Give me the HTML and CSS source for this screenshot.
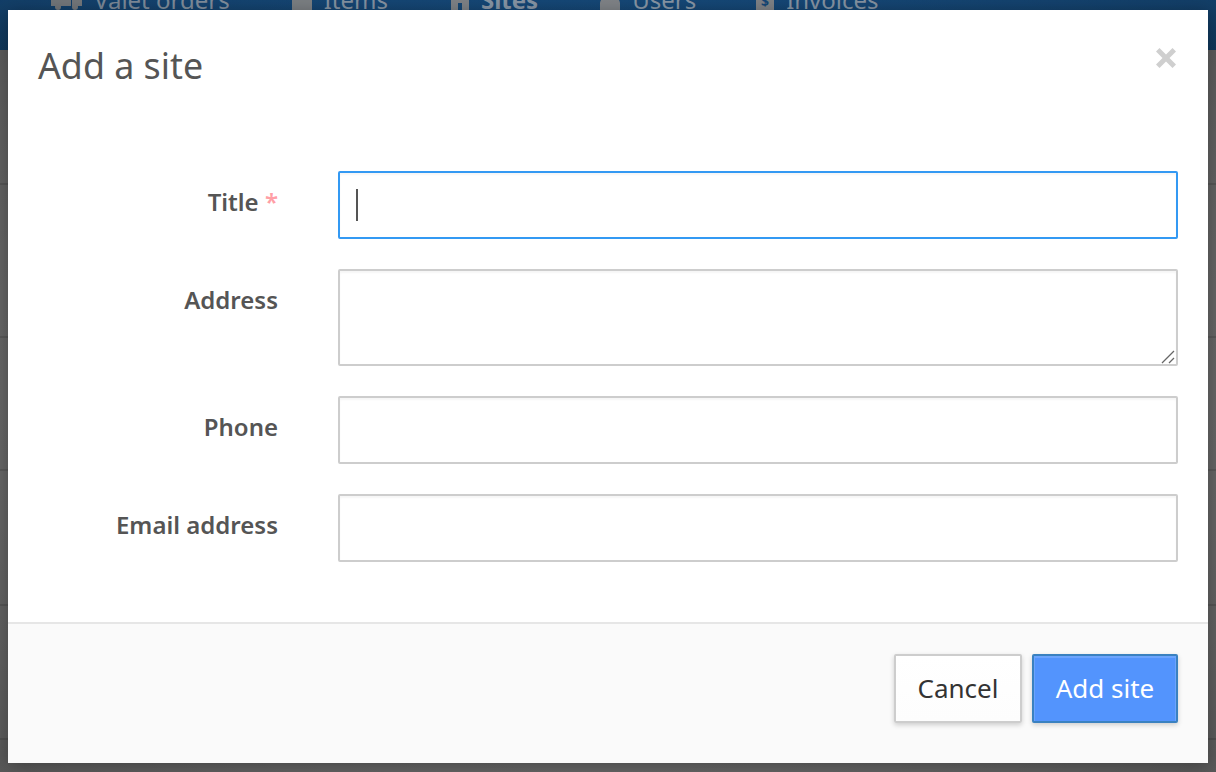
FILE: index.html
```html
<!DOCTYPE html>
<html lang="en">
<head>
<meta charset="utf-8">
<title>Add a site</title>
<link rel="stylesheet" href="styles.css">
</head>
<body>
<div class="page">
  <header class="nav">
    <span class="nav-item nav-valet"><svg class="nav-icon" width="31" height="22" viewBox="0 0 31 22"><path d="M0 0h20v17H0zM21 3h5l5 6v8H21z"/><circle cx="7" cy="18" r="3"/><circle cx="24" cy="18" r="3"/></svg>Valet orders</span>
    <span class="nav-item nav-items"><svg class="nav-icon" width="20" height="22" viewBox="0 0 20 22"><rect width="20" height="22" rx="1"/></svg>Items</span>
    <span class="nav-item nav-sites nav-active"><svg class="nav-icon" width="18" height="22" viewBox="0 0 18 22"><path fill-rule="evenodd" d="M0 0h18v22H0zM4 5h3v4H4zM11 5h3v4h-3zM7 14h4v8H7z"/></svg>Sites</span>
    <span class="nav-item nav-users"><svg class="nav-icon" width="20" height="22" viewBox="0 0 20 22"><path d="M0 22v-8a8 8 0 0 1 4-6h12a8 8 0 0 1 4 6v8z"/></svg>Users</span>
    <span class="nav-item nav-invoices"><svg class="nav-icon" width="18" height="22" viewBox="0 0 18 22"><rect width="18" height="22"/><text class="nav-dollar" x="9" y="17" text-anchor="middle">$</text></svg>Invoices</span>
  </header>
  <div class="rows">
    <div class="row row-a"></div>
    <div class="row row-b"></div>
    <div class="row row-c"></div>
    <div class="row row-d"></div>
    <div class="row row-e"></div>
  </div>
</div>
<div class="backdrop"></div>
<div class="modal">
  <div class="modal-head">
    <h1 class="modal-title">Add a site</h1>
    <svg class="close" width="20" height="20" viewBox="0 0 20 20"><path d="M3.500 0 10 6.500 16.500 0 20 3.500 13.500 10l6.500 6.500-3.500 3.500L10 13.500 3.500 20 0 16.500 6.500 10 0 3.500z"/></svg>
  </div>
  <form class="form">
    <label class="label">Title <span class="req">*</span></label>
    <div class="control input focus"><span class="caret"></span></div>
    <label class="label">Address</label>
    <div class="control input area">
      <svg class="grip" width="16" height="16" viewBox="0 0 16 16"><path d="M2 15 14 3M9 15l5-5" /></svg>
    </div>
    <label class="label">Phone</label>
    <div class="control input"></div>
    <label class="label">Email address</label>
    <div class="control input"></div>
  </form>
  <div class="modal-foot">
    <button type="button" class="btn btn-cancel">Cancel</button>
    <button type="button" class="btn btn-primary">Add site</button>
  </div>
</div>
</body>
</html>
```
FILE: styles.css
```css
* { box-sizing: border-box; }
html, body { margin: 0; height: 772px; overflow: hidden; }
body { font-family: "Noto Sans", "Open Sans", sans-serif; color: #555; background: #6a6a6a; position: relative; }

.page { height: 772px; overflow: hidden; }
.nav { height: 50px; background: linear-gradient(#164a7b, #134068); display: flex; align-items: flex-start; padding-left: 51px; overflow: hidden; }
.nav-item { display: flex; align-items: center; gap: 12px; font-size: 24px; line-height: 24px; color: #8c9bab; margin-top: -12px; white-space: nowrap; }
.nav-items { margin-left: 62px; }
.nav-sites { margin-left: 63px; }
.nav-users { margin-left: 62px; }
.nav-invoices { margin-left: 60px; }
.nav-active { font-weight: 700; }
.nav-icon { fill: #84888c; flex: none; }
.nav-dollar { font-size: 14px; font-weight: 700; fill: #164a7b; }
.rows { display: flex; flex-direction: column; }
.row { border-bottom: 2px solid #5c5c5c; }
.row-a { height: 135px; }
.row-b { height: 153px; }
.row-c { height: 133px; }
.row-d { height: 135px; }
.row-e { height: 134px; }

.backdrop { position: absolute; inset: 0; background: radial-gradient(ellipse at center, rgba(0,0,0,0) 60%, rgba(0,0,0,.16) 100%); }

.modal { position: absolute; left: 8px; top: 10px; width: 1200px; height: 753px; background: #fff; display: flex; flex-direction: column; box-shadow: 0 3px 16px rgba(0,0,0,.3); }
.modal-head { height: 161px; padding: 30px 30px 0; display: flex; justify-content: space-between; align-items: flex-start; }
.modal-title { margin: 0; font-size: 35.800px; line-height: 50px; font-weight: 400; color: #555; }
.close { fill: #cfcfcf; margin: 8px 2px 0 0; }

.form { flex: 1; display: grid; grid-template-columns: 270px 840px; column-gap: 60px; row-gap: 30px; align-content: start; }
.label { font-size: 24px; line-height: 32px; font-weight: 600; color: #555; text-align: right; padding-top: 15px; }
.req { color: #ff9fa6; }
.input { height: 68px; background: #fff; border: 2px solid #cdcdcd; border-radius: 2px; box-shadow: inset 0 2px 2px rgba(0,0,0,.04); position: relative; }
.focus { border-color: #3399f3; padding: 16px 16px; }
.caret { display: block; width: 2px; height: 32px; background: #555; }
.area { height: 97px; }
.grip { position: absolute; right: 0; bottom: 0; fill: none; stroke: #666; stroke-width: 1.300; }

.modal-foot { height: 141px; background: #fafafa; border-top: 2px solid #e6e6e6; display: flex; justify-content: flex-end; align-items: flex-start; gap: 10px; padding: 30px 30px 0; }
.btn { height: 69px; font-family: inherit; font-size: 26px; line-height: 32px; padding: 0 0 2px; border-radius: 2px; box-shadow: 0 2px 5px rgba(0,0,0,.18); cursor: pointer; }
.btn-cancel { width: 128px; background: linear-gradient(#fff, #fdfdfd); border: 2px solid #cdcdcd; color: #333; }
.btn-primary { width: 146px; background: #5394fd; border: 2px solid #3a81c0; color: #fff; box-shadow: inset 0 1px 0 1px rgba(255,255,255,.15), 0 2px 5px rgba(0,0,0,.18); }
```
